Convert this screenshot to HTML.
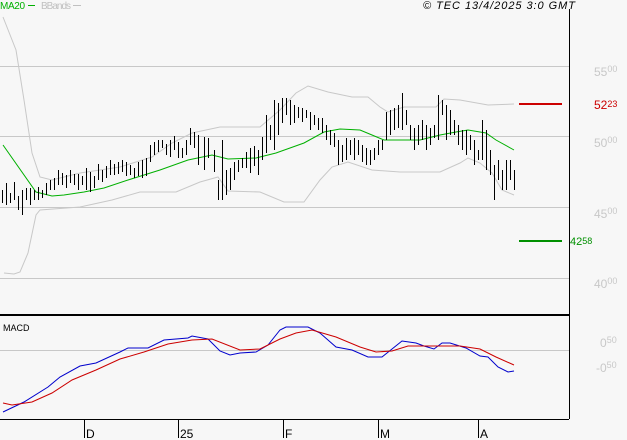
<!DOCTYPE html>
<html><head><meta charset="utf-8"><style>
html,body{margin:0;padding:0;background:#f7f7f7;}
svg{display:block;font-family:"Liberation Sans",sans-serif;}
</style></head><body>
<svg width="627" height="440" viewBox="0 0 627 440" xmlns="http://www.w3.org/2000/svg" shape-rendering="crispEdges">
<rect width="627" height="440" fill="#f7f7f7"/>
<g stroke="#c8c8c8" stroke-width="1">
<line x1="0" y1="66.5" x2="569" y2="66.5"/>
<line x1="0" y1="136.5" x2="569" y2="136.5"/>
<line x1="0" y1="207.5" x2="569" y2="207.5"/>
<line x1="0" y1="278.5" x2="569" y2="278.5"/>
<line x1="0" y1="350.5" x2="569" y2="350.5"/>
</g>
<line x1="569.5" y1="9" x2="569.5" y2="419" stroke="#000"/>
<line x1="0" y1="315" x2="569" y2="315" stroke="#000" stroke-width="2"/>
<line x1="0" y1="419.5" x2="569" y2="419.5" stroke="#000"/>
<g stroke="#000">
<line x1="84.5" y1="419" x2="84.5" y2="438"/>
<line x1="178.5" y1="419" x2="178.5" y2="438"/>
<line x1="283.5" y1="419" x2="283.5" y2="438"/>
<line x1="378.5" y1="419" x2="378.5" y2="438"/>
<line x1="478.5" y1="419" x2="478.5" y2="438"/>
</g>
<g font-size="12" fill="#000">
<text x="86" y="438">D</text><text x="180" y="438">25</text><text x="285" y="438">F</text><text x="380" y="438">M</text><text x="480" y="438">A</text>
</g>
<text x="0" y="9" font-size="10" fill="#00b000" textLength="25">MA20</text>
<line x1="28" y1="5.5" x2="35" y2="5.5" stroke="#00b000"/>
<text x="41" y="9" font-size="10" fill="#c0c0c0" textLength="30">BBands</text>
<line x1="73" y1="5.5" x2="81" y2="5.5" stroke="#c0c0c0"/>
<text x="423" y="9" font-size="11" font-style="italic" fill="#000" textLength="152">© TEC 13/4/2025 3:0 GMT</text>
<text x="3" y="331" font-size="9" fill="#000">MACD</text>
<g font-size="12" fill="#c8c8c8">
<text x="594" y="76">55<tspan font-size="9" dy="-4">00</tspan></text>
<text x="594" y="147">50<tspan font-size="9" dy="-4">00</tspan></text>
<text x="594" y="218">45<tspan font-size="9" dy="-4">00</tspan></text>
<text x="594" y="288">40<tspan font-size="9" dy="-4">00</tspan></text>
<text x="600" y="347">0<tspan font-size="9" dy="-4">50</tspan></text>
<text x="596" y="372">-0<tspan font-size="9" dy="-4">50</tspan></text>
</g>
<line x1="519" y1="104" x2="562" y2="104" stroke="#cc0000" stroke-width="2"/>
<text x="594" y="109" font-size="12" fill="#cc0000">52<tspan font-size="9" dy="-2">23</tspan></text>
<line x1="519" y1="241" x2="562" y2="241" stroke="#009000" stroke-width="2"/>
<text x="570" y="245" font-size="11" fill="#009000">42<tspan font-size="9" dy="-1">58</tspan></text>
<g fill="none" shape-rendering="auto">
<polyline stroke="#c8c8c8" points="3,17 16,50 24,100 32,153 40,177 52,180 80,173 120,167 152,157 172,143 192,133 220,127 260,127 280,110 296,93 308,86 328,92 352,97 368,97 380,107 388,112 404,107 420,107 436,107 444,99 460,100 488,105 514,104"/>
<polyline stroke="#c8c8c8" points="4,273 14,274 20,272 28,253 36,215 40,210 80,207 112,200 140,192 176,192 200,182 218,177 228,191 260,192 284,202 304,202 320,180 332,167 348,162 372,170 400,172 440,172 460,163 468,158 480,163 492,173 502,190 514,195"/>
<polyline stroke="#00b000" points="3,145 36,192 52,196 64,195 84,192 104,188 128,180 160,170 188,160 212,155 228,159 256,158 276,153 304,143 324,132 340,129 360,130 372,135 384,140 420,140 440,135 456,132 468,130 486,133 496,140 514,150"/>
<polyline stroke="#0000cc" points="3,412 24,402 48,387 60,377 80,366 96,363 120,352 128,348 148,348 164,340 188,338 192,336 208,339 220,351 230,355 240,353 256,352 268,345 280,330 286,327 308,327 320,333 336,347 352,350 368,357 382,357 402,341 416,343 424,346 434,349 442,343 450,343 466,348 480,356 488,357 498,367 508,372 514,371"/>
<polyline stroke="#cc0000" points="3,403 12,405 32,402 52,393 72,380 96,370 120,359 144,352 168,344 192,340 212,339 240,350 260,349 280,339 296,333 312,330 336,337 360,347 376,352 392,351 408,346 432,346 460,346 480,349 496,357 514,365"/>
</g>
<path stroke="#000" fill="none" d="
M2.5 190V203M6.5 183V205M10.5 193V203M14.5 182V200M18.5 196V210M22.5 190V215M26.5 188V200M30.5 188V205M34.5 190V200M38.5 187V200
M42.5 190V198M46.5 183V195M50.5 180V190M54.5 178V190M58.5 170V185M62.5 173V185M66.5 175V188M70.5 170V183M74.5 174V185M78.5 174V190
M82.5 176V185M86.5 168V190M90.5 172V192M94.5 176V188M98.5 164V180M102.5 170V182M106.5 166V178M110.5 160V175M114.5 164V175M118.5 162V174
M122.5 160V172M126.5 162V176M130.5 165V175M134.5 168V178M138.5 162V176M142.5 160V178M146.5 158V176M150.5 145V162M154.5 142V155M158.5 140V152
M162.5 140V148M166.5 144V155M170.5 140V157M174.5 136V150M178.5 142V158M182.5 148V158M186.5 140V155M190.5 128V145M194.5 132V148M198.5 135V165
M204.5 137V170M208.5 138V158M214.5 150V172M218.5 180V200M222.5 140V200M226.5 170V195M230.5 168V190M234.5 162V180M238.5 160V172M242.5 158V168
M246.5 152V168M250.5 148V173M254.5 146V166M258.5 150V175M262.5 137V160M266.5 115V153M270.5 125V140M274.5 100V150M278.5 103V135M282.5 98V123
M286.5 98V115M290.5 100V125M294.5 105V123M298.5 107V118M302.5 108V122M306.5 110V118M310.5 112V130M314.5 115V125M318.5 118V130M322.5 118V133
M326.5 125V140M330.5 130V145M334.5 133V147M338.5 140V165M342.5 145V162M346.5 138V160M350.5 140V155M354.5 138V160M358.5 140V155M362.5 145V162
M366.5 148V165M370.5 150V165M374.5 148V160M378.5 140V155M382.5 140V150M386.5 112V140M390.5 110V135M394.5 108V130M398.5 105V128M402.5 93V130
M406.5 110V125M410.5 125V140M414.5 128V150M418.5 125V145M422.5 120V140M426.5 125V150M430.5 128V145M434.5 125V138M438.5 95V140M442.5 100V115
M446.5 105V140M450.5 110V135M454.5 120V135M458.5 125V145M462.5 130V150M466.5 130V155M470.5 135V150M474.5 140V165M478.5 150V160M482.5 120V160
M486.5 130V170M490.5 150V175M494.5 165V200M498.5 160V180M502.5 170V190M506.5 160V190M510.5 160V180M514.5 170V190"/>
</svg>
</body></html>
